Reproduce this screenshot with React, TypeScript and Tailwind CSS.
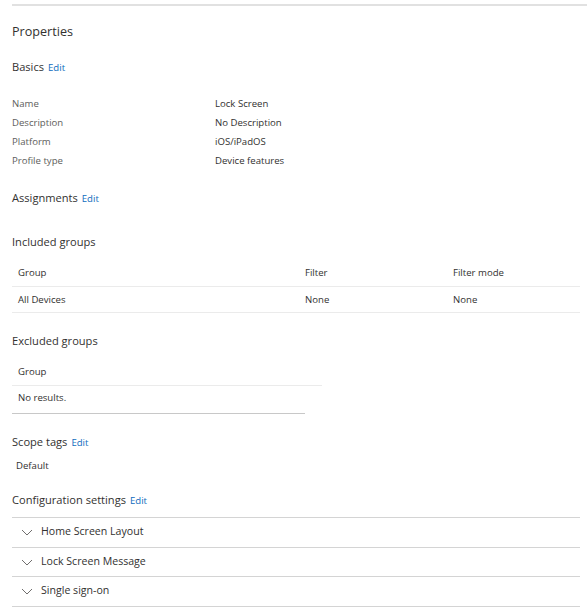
import React from "react";

function Edit() {
  return <a className="text-[9.6px] leading-4 text-[#0f6cbd] ml-[4px]">Edit</a>;
}

function Heading({ title, edit }: { title: string; edit?: boolean }) {
  return (
    <div className="flex items-baseline h-4 leading-4 text-[11.1px] font-medium text-[#323130]">
      <span>{title}</span>
      {edit && <Edit />}
    </div>
  );
}

const basics = [
  ["Name", "Lock Screen"],
  ["Description", "No Description"],
  ["Platform", "iOS/iPadOS"],
  ["Profile type", "Device features"],
];

function Accordion({ label }: { label: string }) {
  return (
    <div className="flex items-center h-[29.7px] pb-[1px] border-b border-[#d4d4d4] text-[10.6px] text-[#323130]">
      <svg width="12" height="12" viewBox="0 0 12 12" fill="none" className="ml-[9px] mr-[8px] shrink-0">
        <path d="M1 4 L6 9 L11 4" stroke="#605e5c" strokeWidth="0.9" />
      </svg>
      <span>{label}</span>
    </div>
  );
}

export default function App() {
  return (
    <div className="w-[587px] h-[616px] overflow-hidden bg-white pl-3 pt-1 font-['Open_Sans','Noto_Sans',sans-serif] text-[9.6px] text-[#323130]">
      <div className="h-[2px] bg-[#e1e1e1]" />
      <h1 className="mt-[16px] h-5 leading-5 text-[12.6px] font-medium text-[#323130]">Properties</h1>
      <div className="mt-[17px]">
        <Heading title="Basics" edit />
      </div>
      <div className="mt-[20px]">
        {basics.map(([k, v]) => (
          <div key={k} className="flex items-center h-[19px]">
            <span className="w-[203px] text-[#605e5c]">{k}</span>
            <span>{v}</span>
          </div>
        ))}
      </div>
      <div className="mt-[19px]">
        <Heading title="Assignments" edit />
      </div>
      <div className="mt-[28px]">
        <Heading title="Included groups" />
      </div>
      <div className="mt-[16px] w-[568px]">
        <div className="grid grid-cols-[287px_148px_1fr] h-[14px] items-center pl-[6px] font-medium">
          <span>Group</span>
          <span>Filter</span>
          <span>Filter mode</span>
        </div>
        <div className="grid grid-cols-[287px_148px_1fr] h-[27px] items-center pl-[6px] pt-[2px] mt-[6px] border-y border-[#ebebeb]">
          <span>All Devices</span>
          <span>None</span>
          <span>None</span>
        </div>
      </div>
      <div className="mt-[20px]">
        <Heading title="Excluded groups" />
      </div>
      <div className="mt-[15px]">
        <div className="w-[310px] h-[22px] pl-[6px] font-medium border-b border-[#ebebeb] leading-[15px]">Group</div>
        <div className="w-[293px] h-[28px] pl-[6px] pb-[2px] flex items-center border-b border-[#c8c8c8]">No results.</div>
      </div>
      <div className="mt-[20px]">
        <Heading title="Scope tags" edit />
      </div>
      <div className="mt-[8px] pl-1 h-[15px] leading-[15px]">Default</div>
      <div className="mt-[19px]">
        <Heading title="Configuration settings" edit />
      </div>
      <div className="mt-[9px] w-[568px] border-t border-[#d4d4d4]">
        <Accordion label="Home Screen Layout" />
        <Accordion label="Lock Screen Message" />
        <Accordion label="Single sign-on" />
      </div>
    </div>
  );
}
